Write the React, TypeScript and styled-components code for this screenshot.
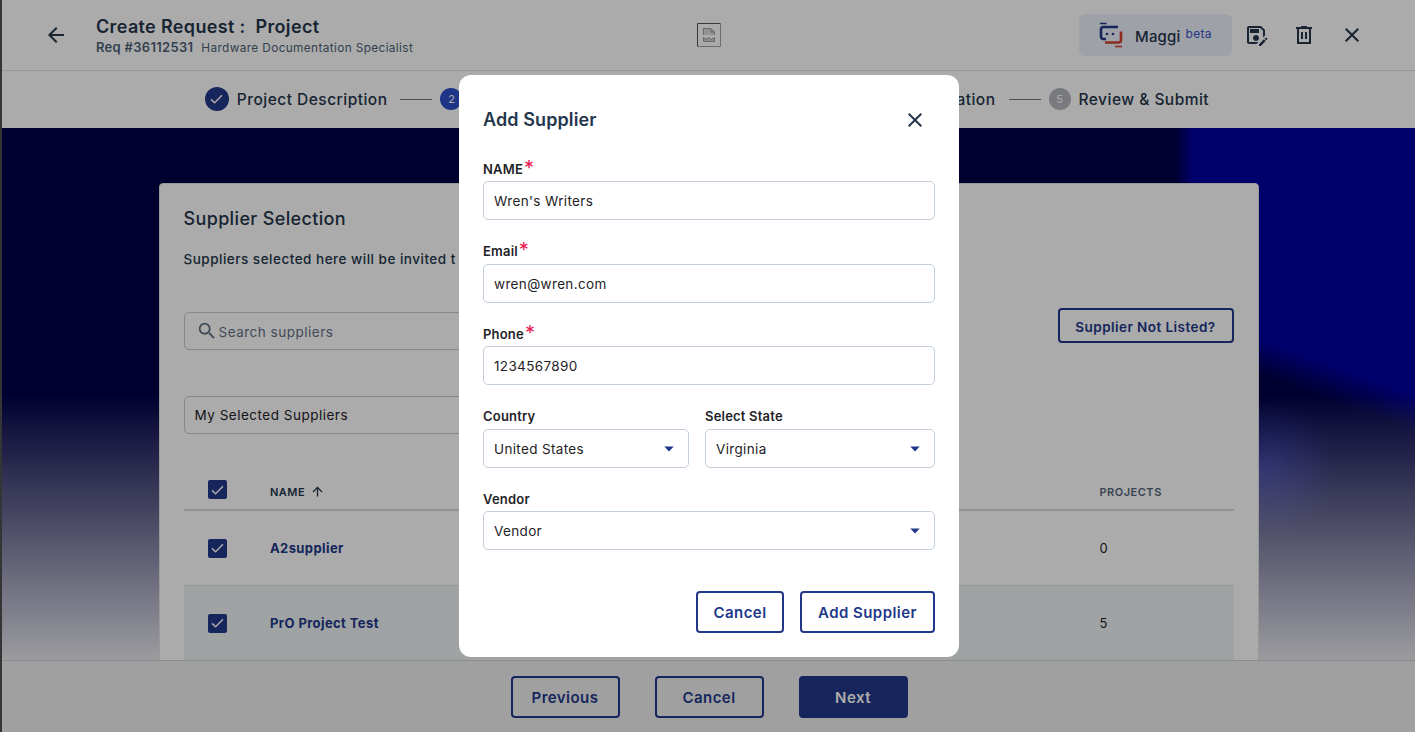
import React from "react";
import styled, { createGlobalStyle } from "styled-components";
import {
  MdArrowBack,
  MdArrowUpward,
  MdClose,
  MdOutlineSaveAs,
  MdSearch,
} from "react-icons/md";

const Brand = "#21388a";
const Ink = "#24364b";
const Body = "#1f2327";
const FieldLine = "#c2ced9";
const Sans = `"Inter", "Liberation Sans", sans-serif`;

const GlobalStyle = createGlobalStyle`
  html, body {
    margin: 0;
    height: 100%;
    overflow: hidden;
    font-family: ${Sans};
    color: ${Body};
  }
  * {
    box-sizing: border-box;
  }
`;

const Page = styled.div`
  display: flex;
  flex-direction: column;
  height: 100vh;
  overflow: hidden;
  background: #fff;
  border-left: 2px solid #505050;
`;

const Header = styled.header`
  flex: none;
  display: grid;
  grid-template-columns: 1fr auto 1fr;
  align-items: center;
  height: 71px;
  padding: 0 42px;
  border-bottom: 1px solid #e2e2e2;
`;

const HeaderLeft = styled.div`
  display: flex;
  align-items: center;
  gap: 28px;
  color: ${Ink};
`;

const HeaderText = styled.div`
  padding-top: 3px;
`;

const HeaderTitle = styled.div`
  font-size: 18px;
  line-height: 22px;
  font-weight: 600;
  letter-spacing: 0.35px;
  white-space: pre;
`;

const HeaderSub = styled.div`
  display: flex;
  align-items: baseline;
  gap: 8px;
  line-height: 18px;
  color: #4d5f75;
`;

const ReqNumber = styled.span`
  font-size: 13px;
  font-weight: 600;
  letter-spacing: 0.3px;
`;

const ReqRole = styled.span`
  font-size: 11.8px;
  letter-spacing: 0.38px;
`;

const HeaderRight = styled.div`
  display: flex;
  align-items: center;
  justify-content: flex-end;
  gap: 24px;
  margin-right: 9px;
  color: ${Ink};
`;

const MaggiButton = styled.div`
  display: flex;
  align-items: center;
  width: 153px;
  height: 42px;
  margin-right: -12px;
  padding-left: 19px;
  border-radius: 6px;
  background: #eef1fb;
`;

const MaggiName = styled.span`
  margin-left: 11px;
  padding-top: 2px;
  font-size: 15px;
  font-weight: 500;
  letter-spacing: 0.2px;
`;

const MaggiBeta = styled.span`
  align-self: flex-start;
  margin: 12px 0 0 5px;
  font-size: 12px;
  letter-spacing: 0.3px;
  color: #3552c4;
`;

const Stepper = styled.nav`
  flex: none;
  display: flex;
  align-items: center;
  justify-content: center;
  height: 57px;
  padding: 0 3px 1px 0;
`;

const Step = styled.div`
  display: flex;
  align-items: center;
  gap: 8px;
`;

const StepDot = styled.span<{ $state: "done" | "active" | "todo" }>`
  display: flex;
  align-items: center;
  justify-content: center;
  width: ${({ $state }) => ($state === "done" ? 24 : 22)}px;
  height: ${({ $state }) => ($state === "done" ? 24 : 22)}px;
  border-radius: 50%;
  font-size: 11px;
  color: #fff;
  background: ${({ $state }) =>
    $state === "done" ? Brand : $state === "active" ? "#2d4fc9" : "#b5b7be"};
`;

const StepLabel = styled.span`
  font-size: 15.5px;
  font-weight: 500;
  letter-spacing: 0.48px;
  color: ${Ink};
  white-space: nowrap;
`;

const StepLine = styled.span`
  width: 32px;
  height: 1px;
  margin: 0 8px 0 13px;
  background: #6f7680;
`;

const Main = styled.main`
  flex: 1;
  min-height: 0;
  display: flex;
  justify-content: center;
  align-items: flex-start;
  padding-top: 55px;
  overflow: hidden;
  background:
    linear-gradient(180deg, rgba(232, 232, 238, 0) 50%, rgba(232, 232, 238, 0.12) 56%, rgba(232, 232, 238, 1) 100%),
    radial-gradient(70px 70px at 1262px 342px, rgba(30, 40, 200, 0.55), rgba(30, 40, 200, 0) 100%),
    linear-gradient(200deg, rgba(0, 0, 72, 0) 25.5%, rgba(0, 0, 72, 1) 29%, rgba(0, 0, 72, 1) 100%),
    linear-gradient(90deg, #000048 0, #000048 1172px, #0000a0 1192px, #0000a0 100%);
`;

const Card = styled.section`
  flex: none;
  width: 1100px;
  padding: 24px;
  border: 1px solid #e4e4e4;
  border-radius: 4px 4px 0 0;
  background: #fff;
`;

const CardTitle = styled.h2`
  margin: 0;
  font-size: 18px;
  line-height: 22px;
  font-weight: 500;
  letter-spacing: 0.35px;
  color: ${Ink};
`;

const CardIntro = styled.p`
  margin: 19px 0 0;
  font-size: 13.5px;
  line-height: 20px;
  font-weight: 500;
  letter-spacing: 0.5px;
  color: ${Ink};
  white-space: nowrap;
`;

const Toolbar = styled.div`
  display: flex;
  justify-content: space-between;
  align-items: flex-start;
  margin-top: 39px;
`;

const SearchBox = styled.div`
  display: flex;
  align-items: center;
  gap: 1px;
  width: 520px;
  height: 38px;
  margin-top: 4px;
  padding-left: 11px;
  border: 1px solid #c5ccd3;
  border-radius: 5px;
  font-size: 13.5px;
  letter-spacing: 0.5px;
  color: #5f7186;

  & > span {
    padding-top: 2px;
  }
`;

const OutlineButton = styled.button<{ $w: number; $h: number; $size?: number }>`
  width: ${({ $w }) => $w}px;
  height: ${({ $h }) => $h}px;
  padding: ${({ $size }) => ($size ? 2 : 1)}px 0 0;
  border: 2px solid ${Brand};
  border-radius: 4px;
  background: transparent;
  font-family: ${Sans};
  font-size: ${({ $size }) => $size || 15}px;
  font-weight: 600;
  letter-spacing: 0.45px;
  color: ${Brand};
`;

const SolidButton = styled(OutlineButton)`
  background: ${Brand};
  color: #fff;
`;

const FilterBox = styled.div`
  display: flex;
  align-items: center;
  width: 520px;
  height: 38px;
  margin-top: 46px;
  padding-left: 10px;
  border: 1px solid #c5ccd3;
  border-radius: 5px;
  font-size: 13.5px;
  letter-spacing: 0.5px;
`;

const TableHead = styled.div`
  display: grid;
  grid-template-columns: 86.5px 1fr 134px;
  align-items: center;
  margin-top: 32px;
  padding: 14px 0 10px;
  border-bottom: 2px solid #d5d9dd;
`;

const HeadCell = styled.div<{ $muted?: boolean }>`
  display: flex;
  align-items: center;
  gap: 5px;
  padding-top: 4px;
  font-size: 11px;
  line-height: 14px;
  font-weight: 600;
  letter-spacing: 0.5px;
  color: ${({ $muted }) => ($muted ? "#55677c" : Ink)};
`;

const TableRow = styled.div<{ $tinted?: boolean }>`
  display: grid;
  grid-template-columns: 86.5px 1fr 134px;
  align-items: center;
  height: 75px;
  border-bottom: 1px solid #dcdfe1;
  background: ${({ $tinted }) => ($tinted ? "#edf3f4" : "#fff")};
`;

const CheckCell = styled.div`
  padding-left: 24px;
`;

const CheckMark = styled.span`
  display: flex;
  align-items: center;
  justify-content: center;
  width: 19px;
  height: 19px;
  border-radius: 2px;
  background: ${Brand};
`;

const SupplierName = styled.span`
  font-size: 13px;
  font-weight: 700;
  letter-spacing: 0.4px;
  color: ${Brand};
`;

const ProjectCount = styled.span`
  font-size: 13px;
  letter-spacing: 0.3px;
`;

const Footer = styled.footer`
  flex: none;
  position: relative;
  display: flex;
  justify-content: center;
  gap: 35px;
  height: 72px;
  padding: 15px 0 0 1px;
  border-top: 1px solid #d0d0d0;
  background: #efefef;
`;

const Overlay = styled.div`
  position: fixed;
  inset: 0;
  display: flex;
  align-items: center;
  justify-content: center;
  padding-left: 3px;
  background: rgba(0, 0, 0, 0.33);
`;

const Dialog = styled.div`
  width: 500px;
  padding: 24px;
  border-radius: 12px;
  background: #fff;
`;

const DialogHead = styled.div`
  display: flex;
  align-items: center;
  justify-content: space-between;
  height: 40px;
  margin-bottom: 20.8px;
  padding-right: 8px;
  color: ${Ink};

  & > svg {
    margin-top: 2px;
  }
`;

const DialogTitle = styled.h3`
  margin: 1px 0 0;
  font-size: 18px;
  font-weight: 600;
  letter-spacing: 0.1px;
`;

const DialogForm = styled.div`
  display: grid;
  grid-template-columns: 206px 1fr;
  column-gap: 16px;
  row-gap: 22px;
`;

const Field = styled.div<{ $half?: boolean }>`
  grid-column: ${({ $half }) => ($half ? "auto" : "1 / -1")};
`;

const FieldLabel = styled.div`
  height: 18px;
  margin-bottom: 3.5px;
  font-size: 13px;
  line-height: 18px;
  font-weight: 600;
  letter-spacing: 0.2px;
`;

const Required = styled.span`
  margin-left: 1px;
  font-size: 20px;
  line-height: 14px;
  font-weight: 400;
  vertical-align: -1px;
  color: #e8174f;
`;

const FieldBox = styled.div`
  display: flex;
  align-items: center;
  justify-content: space-between;
  height: 39px;
  padding: 1px 14px 0 10px;
  border: 1px solid ${FieldLine};
  border-radius: 5px;
  font-size: 13.5px;
  letter-spacing: 0.35px;
`;

const DialogActions = styled.div`
  display: flex;
  justify-content: flex-end;
  gap: 16px;
  margin-top: 41px;
`;

const Caret = () => (
  <svg width="10" height="6" viewBox="0 0 10 6">
    <path d="M0.3 0.4h9.4L5 5.6z" fill={Brand} />
  </svg>
);

const Check = () => (
  <svg width="13" height="10" viewBox="0 0 13 10" fill="none">
    <path d="M1 5.4l3.6 3.4L12 1.2" stroke="#fff" strokeWidth="1.5" />
  </svg>
);

const TrashIcon = () => (
  <svg width="24" height="24" viewBox="0 0 24 24" fill="none" stroke="currentColor" strokeWidth="2">
    <path d="M4 5H20M9 4H15M6 5V20H18V5M10 9V16M14 9V16" />
  </svg>
);

// the image that fails to load in the header, drawn as the browser shows it
const BrokenImage = () => (
  <svg width="24" height="24" viewBox="0 0 24 24" fill="none">
    <path d="M0.5 23.5V0.5H23.5" stroke="#555" />
    <path d="M23.5 0.5V23.5H0.5" stroke="#a2a2a2" />
    <path d="M6.5 12V5.5H14L17.5 9V12" stroke="#9a9a9a" fill="#dcdcdc" />
    <path d="M14 5.5V9H17.5" stroke="#9a9a9a" />
    <path d="M6.5 14.5l2.5 2 2.5-2 2.5 2 3.5-2V18.5H6.5z" stroke="#9a9a9a" fill="#cfd6cf" />
  </svg>
);

const MaggiLogo = () => (
  <svg width="26" height="28" viewBox="0 0 26 28" fill="none">
    <path d="M2 2.5H8.5" stroke="#21388a" strokeWidth="1.6" />
    <path d="M8 18H5.5Q3 18 3 15.5V8.5Q3 6 5.5 6H20" stroke="#21388a" strokeWidth="2.6" />
    <circle cx="9" cy="13" r="1.3" fill="#21388a" />
    <circle cx="15" cy="13" r="1.3" fill="#21388a" />
    <path d="M7 21.5H20.5Q23 21.5 23 19V10.5" stroke="#d2402f" strokeWidth="2.6" />
    <path d="M17 25.5H24" stroke="#d2402f" strokeWidth="1.6" />
  </svg>
);

const steps = [
  { label: "Project Description", state: "done" as const, mark: null },
  { label: "Supplier Selection", state: "active" as const, mark: "2" },
  { label: "Scope of work", state: "todo" as const, mark: "3" },
  { label: "Confirmation", state: "todo" as const, mark: "4" },
  { label: "Review & Submit", state: "todo" as const, mark: "5" },
];

const suppliers = [
  { name: "A2supplier", projects: 0 },
  { name: "PrO Project Test", projects: 5 },
];

const App = () => (
  <>
    <GlobalStyle />
    <Page>
      <Header>
        <HeaderLeft>
          <MdArrowBack size={24} />
          <HeaderText>
            <HeaderTitle>Create Request :  Project</HeaderTitle>
            <HeaderSub>
              <ReqNumber>Req #36112531</ReqNumber>
              <ReqRole>Hardware Documentation Specialist</ReqRole>
            </HeaderSub>
          </HeaderText>
        </HeaderLeft>
        <BrokenImage />
        <HeaderRight>
          <MaggiButton>
            <MaggiLogo />
            <MaggiName>Maggi</MaggiName>
            <MaggiBeta>beta</MaggiBeta>
          </MaggiButton>
          <MdOutlineSaveAs size={24} />
          <TrashIcon />
          <MdClose size={24} />
        </HeaderRight>
      </Header>

      <Stepper>
        {steps.map((step, i) => (
          <React.Fragment key={step.label}>
            {i > 0 && <StepLine />}
            <Step>
              <StepDot $state={step.state}>{step.mark || <Check />}</StepDot>
              <StepLabel>{step.label}</StepLabel>
            </Step>
          </React.Fragment>
        ))}
      </Stepper>

      <Main>
        <Card>
          <CardTitle>Supplier Selection</CardTitle>
          <CardIntro>Suppliers selected here will be invited t</CardIntro>
          <Toolbar>
            <SearchBox>
              <MdSearch size={22} />
              <span>Search suppliers</span>
            </SearchBox>
            <OutlineButton $w={176} $h={35} $size={13.5}>
              Supplier Not Listed?
            </OutlineButton>
          </Toolbar>
          <FilterBox>My Selected Suppliers</FilterBox>
          <TableHead>
            <CheckCell>
              <CheckMark>
                <Check />
              </CheckMark>
            </CheckCell>
            <HeadCell>
              NAME <MdArrowUpward size={15} />
            </HeadCell>
            <HeadCell $muted>PROJECTS</HeadCell>
          </TableHead>
          {suppliers.map((supplier, i) => (
            <TableRow key={supplier.name} $tinted={i === 1}>
              <CheckCell>
                <CheckMark>
                  <Check />
                </CheckMark>
              </CheckCell>
              <SupplierName>{supplier.name}</SupplierName>
              <ProjectCount>{supplier.projects}</ProjectCount>
            </TableRow>
          ))}
        </Card>
      </Main>

      <Footer>
        <OutlineButton $w={109} $h={42}>
          Previous
        </OutlineButton>
        <OutlineButton $w={109} $h={42}>
          Cancel
        </OutlineButton>
        <SolidButton $w={109} $h={42}>
          Next
        </SolidButton>
      </Footer>
    </Page>

    <Overlay>
      <Dialog>
        <DialogHead>
          <DialogTitle>Add Supplier</DialogTitle>
          <MdClose size={24} />
        </DialogHead>
        <DialogForm>
          <Field>
            <FieldLabel>
              NAME<Required>*</Required>
            </FieldLabel>
            <FieldBox>Wren's Writers</FieldBox>
          </Field>
          <Field>
            <FieldLabel>
              Email<Required>*</Required>
            </FieldLabel>
            <FieldBox>wren@wren.com</FieldBox>
          </Field>
          <Field>
            <FieldLabel>
              Phone<Required>*</Required>
            </FieldLabel>
            <FieldBox>1234567890</FieldBox>
          </Field>
          <Field $half>
            <FieldLabel>Country</FieldLabel>
            <FieldBox>
              United States
              <Caret />
            </FieldBox>
          </Field>
          <Field $half>
            <FieldLabel>Select State</FieldLabel>
            <FieldBox>
              Virginia
              <Caret />
            </FieldBox>
          </Field>
          <Field>
            <FieldLabel>Vendor</FieldLabel>
            <FieldBox>
              Vendor
              <Caret />
            </FieldBox>
          </Field>
        </DialogForm>
        <DialogActions>
          <OutlineButton $w={88} $h={42}>
            Cancel
          </OutlineButton>
          <OutlineButton $w={135} $h={42}>
            Add Supplier
          </OutlineButton>
        </DialogActions>
      </Dialog>
    </Overlay>
  </>
);

export default App;
